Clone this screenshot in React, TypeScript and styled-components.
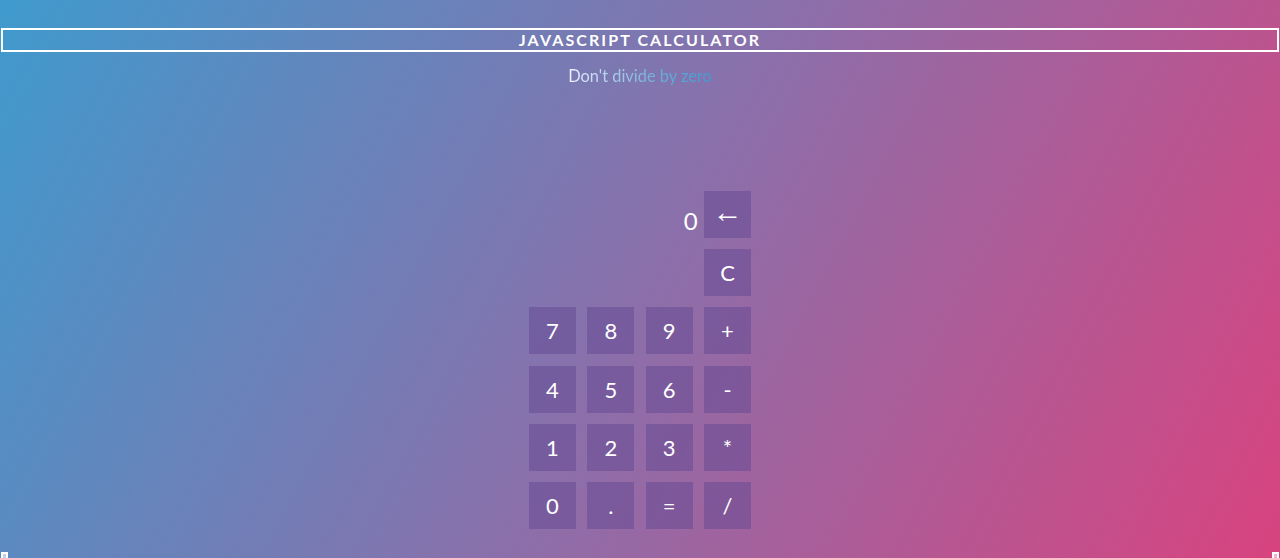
import React from "react";
import styled, { createGlobalStyle } from "styled-components";

const Global = createGlobalStyle`
  html, body { margin: 0; padding: 0; }
  html {
    min-height: 100%;
    background: linear-gradient(118deg, #3f9acd 0%, #8a70ab 50%, #d8437f 100%);
    background-attachment: fixed;
  }
  body {
    min-height: 558px;
    font-family: Lato, "Open Sans", sans-serif;
    color: #fff;
    overflow: hidden;
  }
`;

const Page = styled.div`
  display: flex;
  flex-direction: column;
  align-items: stretch;
  padding-top: 28px;
`;

const Title = styled.h1`
  margin: 0 1px;
  border: 2px solid #fff;
  height: 20px;
  line-height: 20px;
  text-align: center;
  font-size: 16px;
  font-weight: 700;
  letter-spacing: 2.1px;
  color: #fff;
`;

const Subtitle = styled.p`
  margin: 14px auto 0;
  font-size: 16.4px;
  line-height: 20px;
  background: linear-gradient(90deg, #f4f2ff 0%, #b9d4ee 25%, #6fb0da 60%, #3d9bd0 100%);
  -webkit-background-clip: text;
  background-clip: text;
  color: transparent;
`;

const Grid = styled.div`
  margin: 105px auto 0;
  display: grid;
  grid-template-columns: repeat(4, 47px);
  grid-auto-rows: 47px;
  column-gap: 11.33px;
  row-gap: 11.2px;
`;

const Display = styled.div<{ $span: number }>`
  grid-column: span ${(p) => p.$span};
  display: flex;
  align-items: center;
  justify-content: flex-end;
  padding-top: 12px;
  margin-right: -5px;
  font-size: 24px;
  color: #fff;
`;

const Key = styled.button<{ $col?: number }>`
  ${(p) => (p.$col ? `grid-column: ${p.$col};` : "")}
  border: none;
  padding: 0;
  margin: 0;
  background: rgba(98, 72, 146, 0.5);
  color: #fff;
  font-family: Lato, "Open Sans", sans-serif;
  font-size: 22px;
  display: flex;
  align-items: center;
  justify-content: center;
  cursor: pointer;
`;

const Arrow = styled.span`
  font-family: "Liberation Sans", sans-serif;
  font-size: 30px;
  line-height: 1;
  margin-top: -5px;
`;

const Footer = styled.div`
  margin-top: 23px;
  display: flex;
  justify-content: space-between;
  padding: 0 1px;
`;

const Corner = styled.div`
  width: 3px;
  height: 6px;
  border: 2px solid #fff;
  background: rgba(255, 255, 255, 0.6);
`;

const rows = [
  ["7", "8", "9", "+"],
  ["4", "5", "6", "-"],
  ["1", "2", "3", "*"],
  ["0", ".", "=", "/"],
];

export default function App() {
  return (
    <>
      <Global />
      <Page>
        <Title>JAVASCRIPT CALCULATOR</Title>
        <Subtitle>Don't divide by zero</Subtitle>
        <Grid>
          <Display $span={3}>0</Display>
          <Key>
            <Arrow>←</Arrow>
          </Key>
          <Key $col={4}>C</Key>
          {rows.flat().map((k, i) => (
            <Key key={i}>{k}</Key>
          ))}
        </Grid>
        <Footer>
          <Corner />
          <Corner />
        </Footer>
      </Page>
    </>
  );
}
